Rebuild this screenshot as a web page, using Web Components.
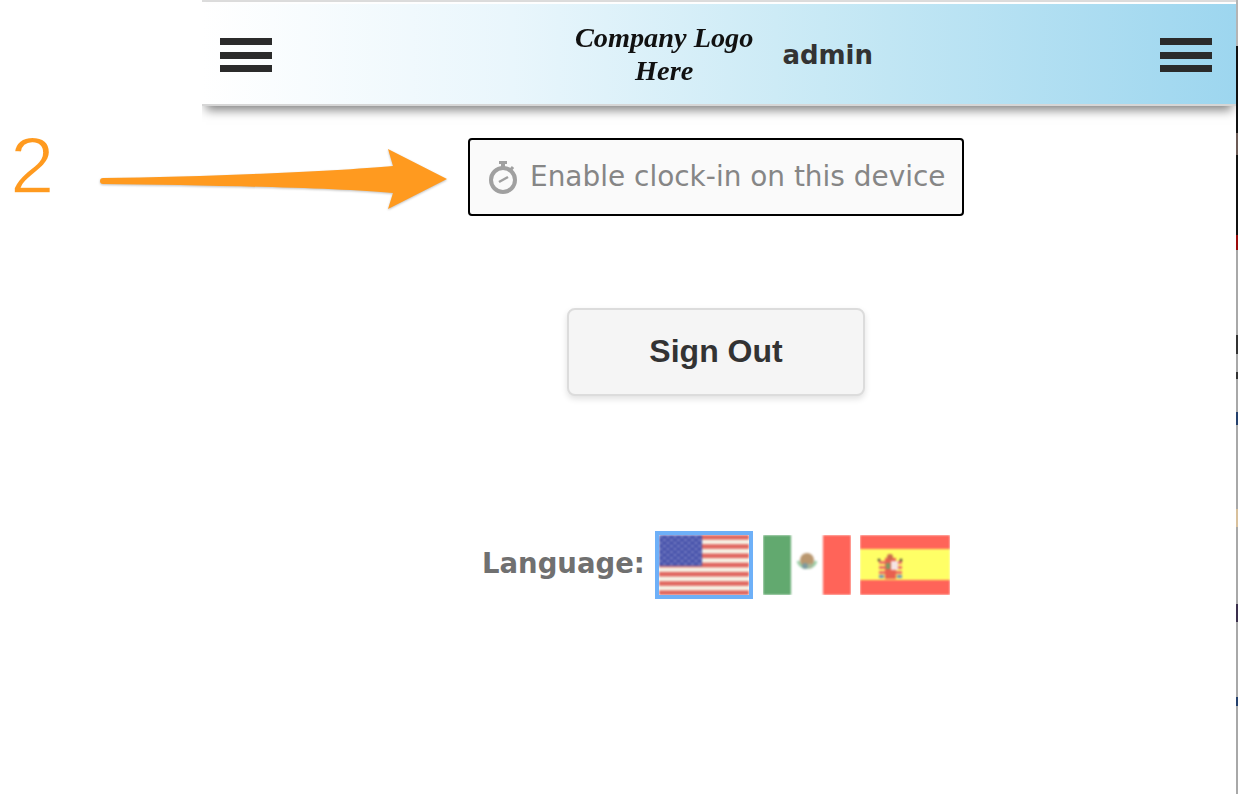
<!DOCTYPE html>
<html lang="en">
<head>
<meta charset="utf-8">
<title>Clock-in</title>
<style>
    html, body { margin: 0; height: 100%; background: #fff; overflow: hidden; }
</style>
</head>
<body>
<app-page>
    <app-header user="admin"></app-header>
    <clock-button>Enable clock-in on this device</clock-button>
    <sign-out-button>Sign Out</sign-out-button>
    <language-picker>Language:</language-picker>
    <step-annotation step="2"></step-annotation>
</app-page>

<script>
class AppPage extends HTMLElement {
    constructor() {
        super();
        this.attachShadow({ mode: 'open' });
        this.shadowRoot.innerHTML = /*html*/ `
        <style>
            :host {
                display: flex;
                position: relative;
                height: 794px;
                width: 1238px;
                overflow: hidden;
            }
            .content {
                flex: 1;
                min-width: 0;
                display: flex;
                flex-direction: column;
            }
            /* sliver of the window behind, at the right edge of the shot */
            .edge {
                width: 2px;
                background: linear-gradient(to bottom,
                    #b4b4b4 0 46px, #111 46px 133px, #6b5a55 133px 155px, #111 155px 235px,
                    #9c0a0a 235px 250px, #a8a8a8 250px 335px, #333 335px 354px,
                    #a8a8a8 354px 372px, #333 372px 379px, #a8a8a8 379px 412px,
                    #24406c 412px 425px, #a8a8a8 425px 509px, #d8c09c 509px 527px,
                    #a8a8a8 527px 604px, #3a2f4c 604px 622px, #a8a8a8 622px 697px,
                    #24406c 697px 706px, #a8a8a8 706px);
            }
        </style>
        <div class="content"><slot></slot></div>
        <div class="edge"></div>
        `;
    }
}

class MenuIcon extends HTMLElement {
    constructor() {
        super();
        this.attachShadow({ mode: 'open' });
        this.shadowRoot.innerHTML = /*html*/ `
        <style>
            :host {
                display: flex;
                flex-direction: column;
                justify-content: space-between;
                width: 52px;
                height: 34px;
            }
            i { display: block; height: 7px; background: #2b2b2b; }
        </style>
        <i></i><i></i><i></i>
        `;
    }
}

class AppHeader extends HTMLElement {
    constructor() {
        super();
        this.attachShadow({ mode: 'open' });
        this.shadowRoot.innerHTML = /*html*/ `
        <style>
            :host {
                display: block;
                margin-left: 202px;
                border-top: 2px solid #dcdcdc;
                padding-top: 2px;
                clip-path: inset(0 0 -30px 0);
            }
            .bar {
                display: flex;
                align-items: center;
                justify-content: space-between;
                box-sizing: border-box;
                height: 102px;
                padding: 2px 24px 0 18px;
                background: linear-gradient(to right, #ffffff 0%, #e9f6fc 30%, #c8e9f5 60%, #9dd6ef 100%);
                border-bottom: 2px solid #d6d6d6;
                box-shadow: 0 8px 10px -4px rgba(0, 0, 0, 0.5);
            }
            .brand {
                display: flex;
                align-items: center;
                gap: 29px;
                margin: 0 0 2px 16px;
            }
            .logo {
                font: italic bold 28.3px/33px 'Liberation Serif', serif;
                color: #111;
                text-align: center;
                filter: blur(0.5px);
            }
            .user {
                margin-top: 2px;
                font: bold 26px 'DejaVu Sans', sans-serif;
                color: #333;
            }
        </style>
        <div class="bar">
            <menu-icon></menu-icon>
            <div class="brand">
                <div class="logo">Company Logo<br>Here</div>
                <div class="user"></div>
            </div>
            <menu-icon></menu-icon>
        </div>
        `;
        this.shadowRoot.querySelector('.user').textContent = this.getAttribute('user');
    }
}

class ClockButton extends HTMLElement {
    constructor() {
        super();
        this.attachShadow({ mode: 'open' });
        this.shadowRoot.innerHTML = /*html*/ `
        <style>
            :host {
                display: flex;
                align-items: center;
                gap: 12px;
                box-sizing: border-box;
                width: 496px;
                height: 78px;
                margin: 32px 0 0 468px;
                padding: 0 0 0 18px;
                background: #fafafa;
                border: 2px solid #000;
                border-radius: 4px;
                font: 27.95px 'DejaVu Sans', sans-serif;
                color: #868686;
                white-space: nowrap;
            }
            svg { flex: none; filter: blur(0.6px); }
            span { margin-bottom: 2px; }
        </style>
        <svg width="30" height="34" viewBox="0 0 30 34">
            <g fill="none" stroke="#a0a0a0">
                <circle cx="15" cy="20" r="12" stroke-width="4"/>
                <path d="M15 2v6" stroke-width="4"/>
                <path d="M11 2.500h8" stroke-width="3"/>
                <path d="M25 7l-2.500 3" stroke-width="3"/>
                <path d="M11 22l9-5" stroke-width="2.500"/>
            </g>
        </svg>
        <span><slot></slot></span>
        `;
    }
}

class SignOutButton extends HTMLElement {
    constructor() {
        super();
        this.attachShadow({ mode: 'open' });
        this.shadowRoot.innerHTML = /*html*/ `
        <style>
            :host {
                display: flex;
                align-items: center;
                justify-content: center;
                box-sizing: border-box;
                width: 298px;
                height: 88px;
                margin: 92px 0 0 567px;
                padding-bottom: 2px;
                background: #f5f5f5;
                border: 2px solid #dcdcdc;
                border-radius: 8px;
                box-shadow: 0 3px 6px rgba(0, 0, 0, 0.12);
                font: bold 32px 'Liberation Sans', sans-serif;
                color: #333;
            }
        </style>
        <slot></slot>
        `;
    }
}

class LanguagePicker extends HTMLElement {
    constructor() {
        super();
        this.attachShadow({ mode: 'open' });
        this.shadowRoot.innerHTML = /*html*/ `
        <style>
            :host {
                display: flex;
                align-items: center;
                height: 68px;
                margin: 135px 0 0 482px;
                font: bold 27.500px 'DejaVu Sans', sans-serif;
                color: #707070;
                white-space: nowrap;
            }
            .label { width: 173px; margin-bottom: 4px; }
            .flag { display: block; overflow: hidden; height: 60px; }
            .flag svg { display: block; filter: blur(0.9px); }
            .current { border: 4px solid #6eb0f8; margin-right: 10px; }
            .mx { margin-right: 9px; }
        </style>
        <span class="label"><slot></slot></span>

        <div class="flag current">
            <svg width="90" height="60" viewBox="0 0 90 60">
                <defs>
                    <pattern id="stars" width="7" height="6" patternUnits="userSpaceOnUse">
                        <circle cx="2" cy="2" r="1.100" fill="#8d93cc"/>
                        <circle cx="5.500" cy="5" r="1.100" fill="#8d93cc"/>
                    </pattern>
                </defs>
                <rect x="-4" y="-4" width="98" height="68" fill="#f6f3e6"/>
                <g fill="#e0665f">
                    <rect x="-4" y="-4" width="98" height="8.600"/>
                    <rect x="-4" y="9.200" width="98" height="4.600"/>
                    <rect x="-4" y="18.500" width="98" height="4.600"/>
                    <rect x="-4" y="27.700" width="98" height="4.600"/>
                    <rect x="-4" y="36.900" width="98" height="4.600"/>
                    <rect x="-4" y="46.200" width="98" height="4.600"/>
                    <rect x="-4" y="55.400" width="98" height="8.600"/>
                </g>
                <rect x="-4" y="-4" width="47" height="35" fill="#4b56ad"/>
                <rect width="43" height="31" fill="url(#stars)"/>
            </svg>
        </div>

        <div class="flag mx">
            <svg width="88" height="60" viewBox="0 0 88 60">
                <rect x="-4" y="-4" width="96" height="68" fill="#fff"/>
                <rect x="-4" y="-4" width="32" height="68" fill="#62a96f"/>
                <rect x="60" y="-4" width="32" height="68" fill="#ff6459"/>
                <path d="M35 26a9.500 9.500 0 0 0 18 0" fill="none" stroke="#9ccfa8" stroke-width="3"/>
                <circle cx="44" cy="25" r="7" fill="#b9976f"/>
                <circle cx="42" cy="31" r="3" fill="#7d9aa0"/>
                <circle cx="47" cy="31" r="2.500" fill="#a8b89a"/>
            </svg>
        </div>

        <div class="flag">
            <svg width="90" height="60" viewBox="0 0 90 60">
                <rect x="-4" y="-4" width="98" height="68" fill="#ff6459"/>
                <rect x="-4" y="14" width="98" height="31" fill="#ffff66"/>
                <!-- pillars -->
                <g fill="#ef6f66">
                    <rect x="19" y="26" width="6" height="3"/>
                    <rect x="19" y="31" width="6" height="3"/>
                    <rect x="19" y="36" width="6" height="3"/>
                    <rect x="36" y="26" width="6" height="3"/>
                    <rect x="36" y="31" width="6" height="3"/>
                    <rect x="36" y="36" width="6" height="3"/>
                </g>
                <rect x="25" y="23" width="11" height="21" fill="#e8604f"/>
                <rect x="31" y="26" width="7" height="9" fill="#f4e4e4"/>
                <rect x="26" y="28" width="4" height="6" fill="#7d9a63"/>
                <circle cx="30" cy="22" r="3" fill="#c8694c"/>
                <circle cx="19" cy="25" r="1.300" fill="#333"/>
                <circle cx="41" cy="25" r="1.300" fill="#333"/>
                <rect x="19" y="40" width="5" height="3" fill="#6d8fc0"/>
                <rect x="37" y="40" width="5" height="3" fill="#6d8fc0"/>
            </svg>
        </div>
        `;
    }
}

class StepAnnotation extends HTMLElement {
    constructor() {
        super();
        this.attachShadow({ mode: 'open' });
        this.shadowRoot.innerHTML = /*html*/ `
        <style>
            :host {
                position: absolute;
                left: 0;
                top: 125px;
                width: 460px;
                height: 100px;
            }
            .num {
                position: absolute;
                left: 10px;
                top: -7px;
                font: 80px/1.2 'Liberation Sans', sans-serif;
                /* white stroke thins the glyph to a light weight */
                -webkit-text-stroke: 1.500px #fff;
                color: #ff9a1f;
            }
            svg { position: absolute; left: 0; top: 0; }
        </style>
        <span class="num"></span>
        <svg width="460" height="100" viewBox="0 0 460 100">
            <path d="M100 56 C100 58 101 59 103 59 C200 60 340 63 393 68 L388 84 L447 54 L388 24 L393 41 C340 46 200 52 103 53 C101 53 100 54 100 56Z"
                fill="#ff9a1f" style="filter: drop-shadow(0 1px 1px rgba(0,0,0,.25))"/>
        </svg>
        `;
        this.shadowRoot.querySelector('.num').textContent = this.getAttribute('step');
    }
}

customElements.define('menu-icon', MenuIcon);
customElements.define('app-header', AppHeader);
customElements.define('clock-button', ClockButton);
customElements.define('sign-out-button', SignOutButton);
customElements.define('language-picker', LanguagePicker);
customElements.define('step-annotation', StepAnnotation);
customElements.define('app-page', AppPage);
</script>
</body>
</html>
